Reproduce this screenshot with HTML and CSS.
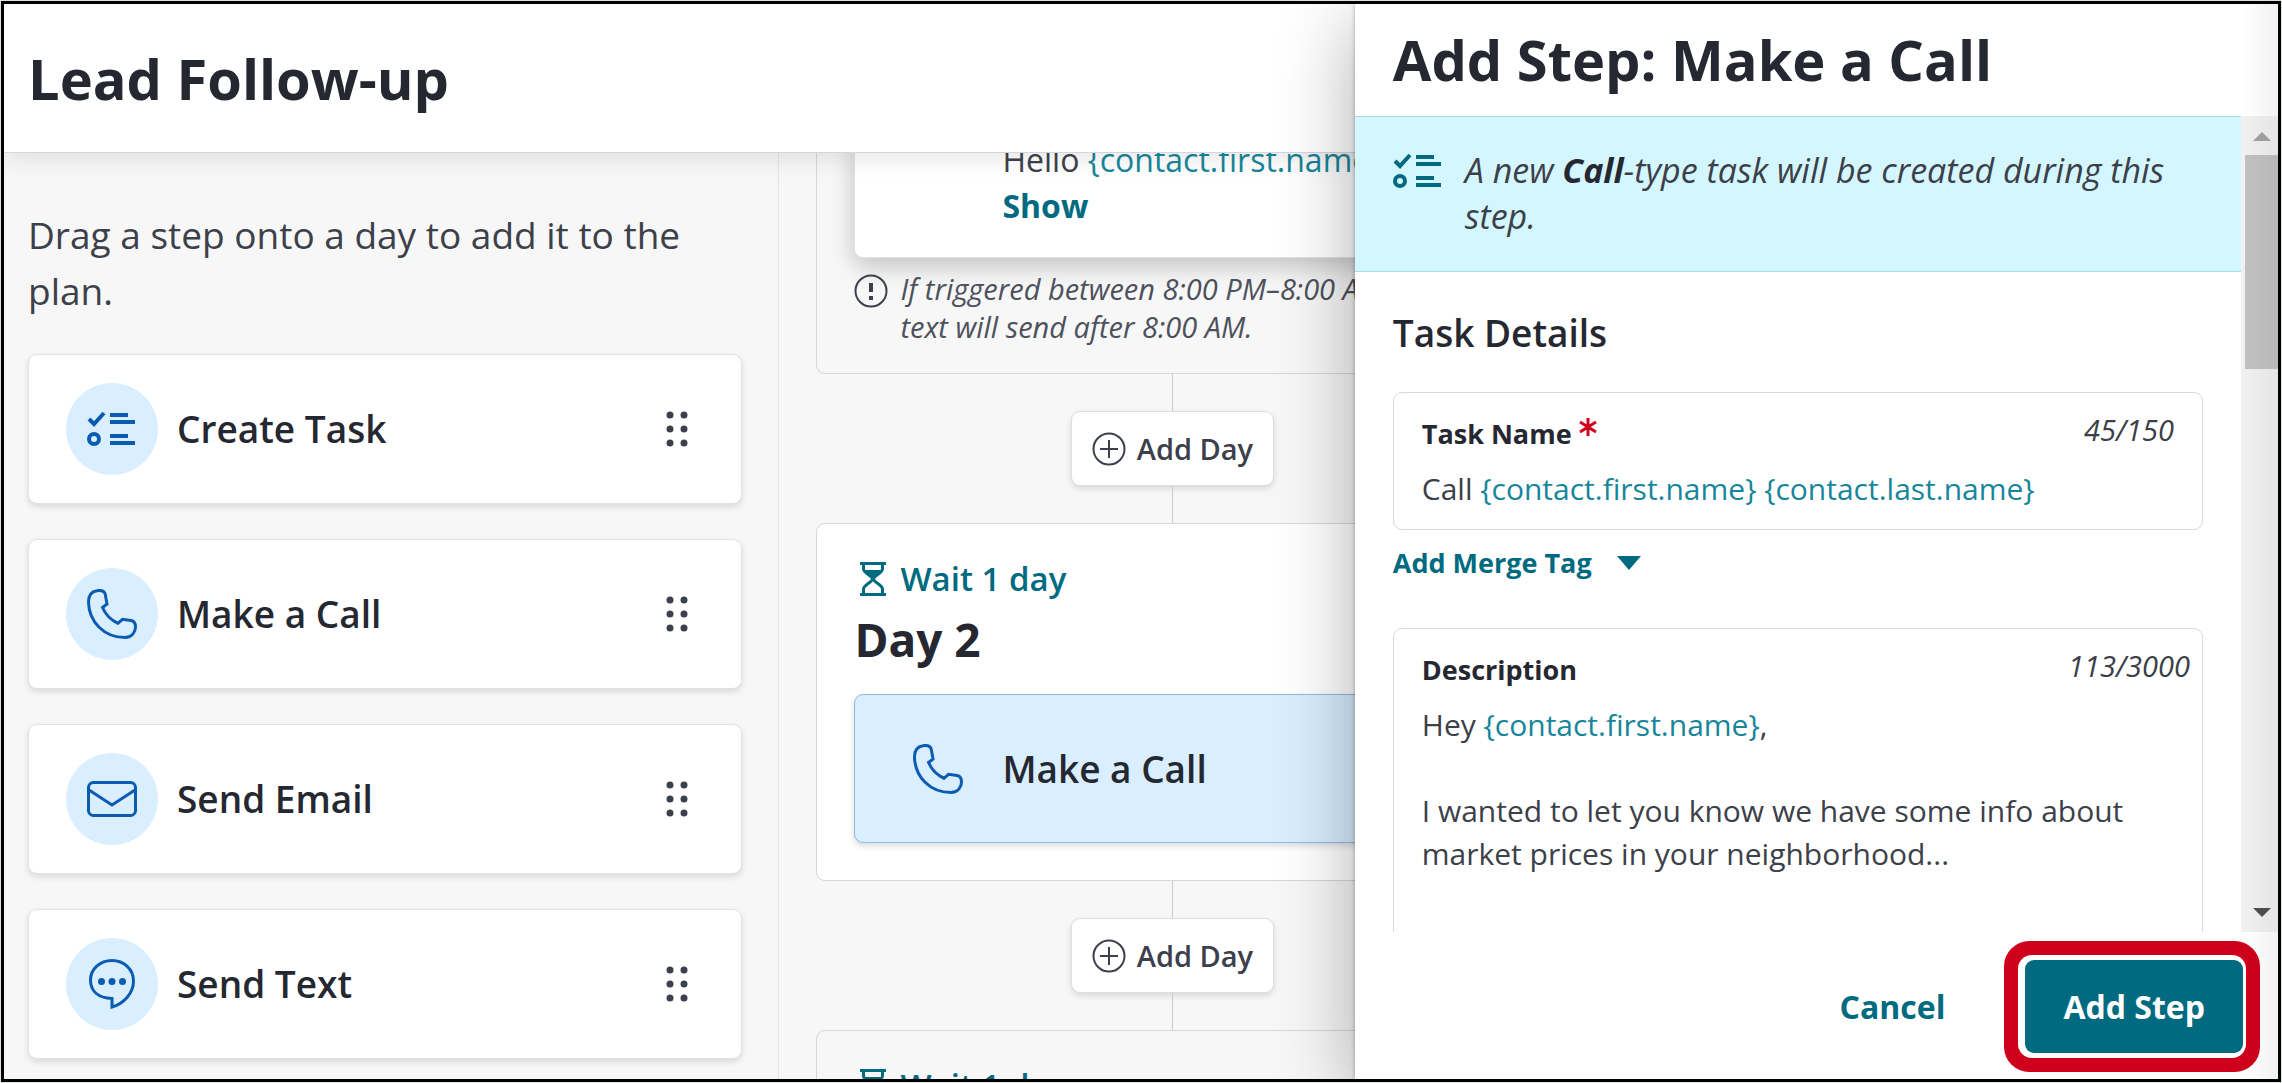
FILE: index.html
```html
<!DOCTYPE html>
<html lang="en">
<head>
    <meta charset="UTF-8">
    <meta name="viewport" content="width=device-width, initial-scale=1.0">
    <title>Lead Follow-up</title>
    <link rel="stylesheet" href="styles.css">
</head>
<body>

    <!-- Shared icons -->
    <svg class="sprite" aria-hidden="true">
        <symbol id="icon-task" viewBox="0 0 50 36">
            <path d="M2 8l5 5L17 2M23 4h18M23 11h25M23 25h18M23 32h25"/>
            <ellipse cx="7" cy="28" rx="5" ry="5"/>
        </symbol>
        <symbol id="icon-call" viewBox="0 0 50 50">
            <path d="M10 1.7C4 2.5 1.5 7 1.5 13C2 33 17 48.5 38 48.5C45 48.5 48.5 43 48.5 38C48.5 34 47 32 44 31.5L35.5 30.3L31 34.3C24 31 18.5 25.5 15.5 18.5L20 15L18.3 5.5C17.5 2 14 1 10 1.7Z"/>
        </symbol>
        <symbol id="icon-mail" viewBox="0 0 50 36">
            <rect x="1.5" y="1.5" width="47" height="33" rx="5"/>
            <path d="M2 9l23 15L48 9"/>
        </symbol>
        <symbol id="icon-text" viewBox="0 0 50 50">
            <path d="M25 39.5V48C37 44.5 46.5 34 46.5 22C46.5 10.5 37 1.5 25 1.5C13 1.5 3.5 10 3.5 21C3.5 32 11 39 25 39.5Z"/>
            <g class="dots"><circle cx="14.5" cy="22.5" r="3.5"/><circle cx="25" cy="22.5" r="3.5"/><circle cx="35.5" cy="22.5" r="3.5"/></g>
        </symbol>
        <symbol id="icon-grip" viewBox="0 0 24 36">
            <circle cx="4" cy="4" r="3.5"/><circle cx="18" cy="4" r="3.5"/>
            <circle cx="4" cy="18" r="3.5"/><circle cx="18" cy="18" r="3.5"/>
            <circle cx="4" cy="32" r="3.5"/><circle cx="18" cy="32" r="3.5"/>
        </symbol>
        <symbol id="icon-hourglass" viewBox="0 0 26 34">
            <path d="M0 1.5h26M0 32.5h26M3.5 2v5c0 4 9 7 9 10s-9 6-9 10v5M22.5 2v5c0 4-9 7-9 10s9 6 9 10v5"/>
            <path class="sand" d="M4 8h18c-1 3-8 6-9 10c-1-4-8-7-9-10z"/>
        </symbol>
        <symbol id="icon-plus" viewBox="0 0 34 34">
            <circle cx="17" cy="17" r="15.5"/>
            <path d="M17 8v18M8 17h18"/>
        </symbol>
        <symbol id="icon-alert" viewBox="0 0 34 34">
            <circle cx="17" cy="17" r="15.5"/>
            <path class="mark" d="M17 9v9M17 22v4"/>
        </symbol>
    </svg>

    <div class="app">
        <header class="page-header">
            <h1 class="title">Lead Follow-up</h1>
        </header>

        <div class="workspace">
            <aside class="sidebar">
                <p class="hint">Drag a step onto a day to add it to the plan.</p>
                <ul class="step-list">
                    <li class="step-item" draggable="true">
                        <span class="badge"><svg class="icon icon-wide icon-bold"><use href="#icon-task"/></svg></span>
                        <span class="step-name">Create Task</span>
                        <svg class="grip"><use href="#icon-grip"/></svg>
                    </li>
                    <li class="step-item" draggable="true">
                        <span class="badge"><svg class="icon"><use href="#icon-call"/></svg></span>
                        <span class="step-name">Make a Call</span>
                        <svg class="grip"><use href="#icon-grip"/></svg>
                    </li>
                    <li class="step-item" draggable="true">
                        <span class="badge"><svg class="icon icon-wide"><use href="#icon-mail"/></svg></span>
                        <span class="step-name">Send Email</span>
                        <svg class="grip"><use href="#icon-grip"/></svg>
                    </li>
                    <li class="step-item" draggable="true">
                        <span class="badge"><svg class="icon"><use href="#icon-text"/></svg></span>
                        <span class="step-name">Send Text</span>
                        <svg class="grip"><use href="#icon-grip"/></svg>
                    </li>
                </ul>
            </aside>

            <main class="plan">
                <section class="day day-first">
                    <div class="message">
                        <p>Hello <span class="tag">{contact.first.name}</span></p>
                        <button type="button" class="show">Show</button>
                    </div>
                    <p class="note">
                        <svg class="icon-small"><use href="#icon-alert"/></svg>
                        <span>If triggered between 8:00 PM–8:00 AM, this text will send after 8:00 AM.</span>
                    </p>
                </section>

                <div class="connector">
                    <button type="button" class="add-day"><svg class="icon-small"><use href="#icon-plus"/></svg>Add Day</button>
                </div>

                <section class="day day-active">
                    <button type="button" class="wait"><svg class="hourglass"><use href="#icon-hourglass"/></svg>Wait 1 day</button>
                    <h2 class="day-title">Day 2</h2>
                    <div class="selected-step">
                        <svg class="icon"><use href="#icon-call"/></svg>
                        <span class="step-name">Make a Call</span>
                    </div>
                </section>

                <div class="connector">
                    <button type="button" class="add-day"><svg class="icon-small"><use href="#icon-plus"/></svg>Add Day</button>
                </div>

                <section class="day">
                    <button type="button" class="wait"><svg class="hourglass"><use href="#icon-hourglass"/></svg>Wait 1 day</button>
                </section>
            </main>
        </div>

        <!-- Add step drawer -->
        <form class="drawer">
            <h2 class="title drawer-title">Add Step: Make a Call</h2>

            <div class="drawer-body">
                <div class="drawer-content">
                    <div class="banner">
                        <svg class="icon icon-wide icon-bold"><use href="#icon-task"/></svg>
                        <p>A new <strong>Call</strong>-type task will be created during this step.</p>
                    </div>

                    <div class="details">
                        <h3 class="details-title">Task Details</h3>

                        <div class="field">
                            <div class="field-head">
                                <label for="task-name">Task Name <svg class="required" viewBox="0 0 18 18"><path d="M9 0v18M1 4l16 10M17 4L1 14"/></svg></label>
                                <span class="count">45/150</span>
                            </div>
                            <div class="tag-input">
                                <div class="tag-text" aria-hidden="true">Call <span class="tag">{contact.first.name}</span> <span class="tag">{contact.last.name}</span></div>
                                <input type="text" id="task-name" value="Call {contact.first.name} {contact.last.name}" required>
                            </div>
                        </div>

                        <button type="button" class="merge-tag">Add Merge Tag <span class="caret"></span></button>

                        <div class="field field-large">
                            <div class="field-head">
                                <label for="description">Description</label>
                                <span class="count">113/3000</span>
                            </div>
                            <div class="tag-input">
                                <div class="tag-text" aria-hidden="true">Hey <span class="tag">{contact.first.name}</span>,

I wanted to let you know we have some info about market prices in your neighborhood...</div>
                                <textarea id="description" rows="7">Hey {contact.first.name},

I wanted to let you know we have some info about market prices in your neighborhood...</textarea>
                            </div>
                        </div>
                    </div>
                </div>

                <div class="scrollbar" aria-hidden="true">
                    <span class="arrow arrow-up"></span>
                    <span class="thumb"></span>
                    <span class="arrow arrow-down"></span>
                </div>
            </div>

            <div class="drawer-footer">
                <button type="button" class="cancel">Cancel</button>
                <button type="submit" class="submit">Add Step</button>
            </div>
        </form>
    </div>

</body>
</html>
```
FILE: styles.css
```css
* {
    box-sizing: border-box;
}

body {
    margin: 0;
    padding: 1px;
    height: 100vh;
    overflow: hidden;
    font-family: "Open Sans", "Noto Sans", sans-serif;
    color: #3c4049;
    background-color: #dfe3e0;
}

h1, h2, h3, p, ul {
    margin: 0;
    padding: 0;
}

button, input, textarea {
    font: inherit;
    border: none;
    background: none;
    padding: 0;
    margin: 0;
}

button {
    cursor: pointer;
}

.sprite {
    position: absolute;
    width: 0;
    height: 0;
}

.app {
    position: relative;
    height: 100%;
    display: flex;
    flex-direction: column;
    overflow: hidden;
    border: 3px solid #000;
    background-color: #f7f7f7;
}

.title {
    font-size: 56px;
    line-height: 72px;
    font-weight: 700;
    color: #252831;
}

.page-header {
    position: relative;
    z-index: 1;
    padding: 38px 24px;
    background-color: white;
    border-bottom: 1px solid #d5d6db;
    box-shadow: 0 4px 24px rgba(40, 44, 60, 0.12);
}

.workspace {
    flex: 1;
    min-height: 0;
    display: flex;
}

/* Icons */
.icon {
    flex: none;
    width: 50px;
    height: 50px;
    fill: none;
    stroke: #0b5cb0;
    stroke-width: 3;
}

.icon-wide {
    height: 36px;
}

.icon-bold {
    stroke-width: 4;
}

.icon-small {
    flex: none;
    width: 34px;
    height: 34px;
    fill: none;
    stroke: #3c404c;
    stroke-width: 2;
}

.dots {
    fill: #0b5cb0;
    stroke: none;
}

.mark {
    stroke-width: 4;
}

.sand {
    fill: #006b80;
    stroke: none;
}

/* Sidebar */
.sidebar {
    flex: 0 0 34.1%;
    padding: 54px 36px 0 24px;
    border-right: 1px solid #e2e3e5;
    overflow: hidden;
}

.hint {
    margin-bottom: 35px;
    font-size: 37px;
    line-height: 56px;
}

.step-list {
    display: flex;
    flex-direction: column;
    gap: 35px;
    list-style: none;
}

.step-item {
    display: flex;
    align-items: center;
    gap: 19px;
    padding: 28px 51px 28px 37px;
    background-color: white;
    border: 1px solid #e2e2e4;
    border-radius: 9px;
    box-shadow: 0 3px 6px rgba(0, 0, 0, 0.12);
    cursor: grab;
}

.badge {
    display: flex;
    align-items: center;
    justify-content: center;
    width: 92px;
    height: 92px;
    border-radius: 50%;
    background-color: #d9eeff;
}

.step-name {
    flex: 1;
    font-size: 37px;
    line-height: 50px;
    font-weight: 600;
    color: #252831;
}

.grip {
    width: 24px;
    height: 36px;
    fill: #3c404c;
}

/* Plan column, scrolled a little way down */
.plan {
    flex: 1;
    min-width: 0;
    margin-top: -16px;
    padding-left: 37px;
}

.day {
    max-width: 712px;
    padding: 33px 37px 37px;
    border: 1px solid #d5d6d9;
    border-radius: 9px;
}

.day-active {
    background-color: white;
}

.day-first {
    padding-top: 0;
    padding-bottom: 27px;
    border-top: none;
}

.message {
    padding: 0 37px 28px 147px;
    font-size: 32px;
    line-height: 46px;
    background-color: white;
    border: 1px solid #e2e2e4;
    border-top: none;
    border-radius: 0 0 9px 9px;
    box-shadow: 0 8px 24px rgba(0, 0, 0, 0.22);
}

.tag {
    color: #17869a;
}

.show {
    display: block;
    font-weight: 700;
    color: #006b80;
}

.note {
    display: flex;
    gap: 12px;
    margin-top: 12px;
    font-size: 29px;
    line-height: 38px;
    font-style: italic;
    color: #4d515c;
}

.note .icon-small {
    margin-top: 4px;
}

.connector {
    display: flex;
    flex-direction: column;
    align-items: center;
    max-width: 712px;
}

.connector::before,
.connector::after {
    content: "";
    width: 1px;
    height: 37px;
    background-color: #c9cacd;
}

.add-day {
    display: flex;
    align-items: center;
    gap: 11px;
    height: 75px;
    padding: 0 20px;
    font-size: 29px;
    font-weight: 600;
    color: #3c404c;
    background-color: white;
    border: 1px solid #dedfe1;
    border-radius: 9px;
    box-shadow: 0 3px 6px rgba(0, 0, 0, 0.12);
}

.wait {
    display: flex;
    align-items: center;
    gap: 14px;
    padding-left: 6px;
    font-size: 33px;
    line-height: 44px;
    font-weight: 600;
    color: #006b80;
}

.hourglass {
    width: 26px;
    height: 34px;
    fill: none;
    stroke: #006b80;
    stroke-width: 3;
}

.day-title {
    margin: 10px 0 27px;
    font-size: 46px;
    line-height: 56px;
    font-weight: 700;
    color: #252831;
}

.selected-step {
    display: flex;
    align-items: center;
    gap: 39px;
    height: 149px;
    padding: 0 58px;
    background-color: #d9eeff;
    border: 1px solid #8fbbe4;
    border-radius: 9px;
    box-shadow: 0 3px 6px rgba(0, 0, 0, 0.14);
}

/* Drawer */
.drawer {
    position: absolute;
    z-index: 2;
    top: 0;
    right: 0;
    bottom: 0;
    width: 40.6%;
    display: flex;
    flex-direction: column;
    background-color: white;
    box-shadow: 0 18px 72px rgba(0, 0, 0, 0.32), 0 0 4px rgba(0, 0, 0, 0.3);
}

.drawer::after {
    content: "";
    position: absolute;
    top: 0;
    right: 0;
    bottom: 0;
    width: 36px;
    background: linear-gradient(to right, transparent, rgba(0, 0, 0, 0.05));
    pointer-events: none;
}

.drawer-title {
    padding: 19px 38px 21px;
}

.drawer-body {
    flex: 1;
    min-height: 0;
    display: flex;
}

.drawer-content {
    flex: 1;
    min-width: 0;
    overflow: hidden;
}

.banner {
    display: flex;
    gap: 22px;
    padding: 30px 38px 32px;
    font-size: 34px;
    line-height: 46px;
    font-style: italic;
    background-color: #d4f7ff;
    border-top: 1px solid #a9dde7;
    border-bottom: 1px solid #a9dde7;
}

.banner strong {
    color: #252831;
}

.banner .icon {
    margin-top: 6px;
    stroke: #006b80;
}

.details {
    padding: 36px 38px 0;
}

.details-title {
    margin-bottom: 34px;
    font-size: 37px;
    line-height: 50px;
    font-weight: 600;
    color: #252831;
}

.field {
    padding: 23px 28px 19px;
    border: 1px solid #d9dadd;
    border-radius: 9px;
}

.field-large {
    padding-right: 12px;
}

.field-head {
    display: flex;
    align-items: flex-start;
    justify-content: space-between;
    margin-bottom: 15px;
}

.field-head label {
    font-size: 27px;
    line-height: 36px;
    font-weight: 700;
    color: #252831;
}

.required {
    width: 18px;
    height: 18px;
    vertical-align: 8px;
    stroke: #d0021b;
    stroke-width: 3;
}

.count {
    font-size: 29px;
    line-height: 28px;
    font-style: italic;
}

/* Coloured tags are painted under the editable text */
.tag-input {
    display: grid;
    font-size: 30px;
    line-height: 43px;
}

.tag-text,
.tag-input input,
.tag-input textarea {
    grid-area: 1 / 1;
    width: 100%;
    white-space: pre-wrap;
}

.tag-input input,
.tag-input textarea {
    height: auto;
    display: block;
    color: transparent;
    caret-color: #252831;
    resize: none;
    outline: none;
    overflow: hidden;
}

.merge-tag {
    display: flex;
    align-items: center;
    gap: 25px;
    margin: 15px 0 47px;
    font-size: 27px;
    line-height: 36px;
    font-weight: 700;
    color: #006b80;
}

.caret {
    border: 12px solid transparent;
    border-top: 14px solid #006b80;
    border-bottom: none;
}

.scrollbar {
    display: flex;
    flex-direction: column;
    align-items: center;
    width: 37px;
    padding: 0 0 0 4px;
    background-color: #f1f1f1;
}

.arrow {
    border: 9px solid transparent;
}

.arrow-up {
    margin: 16px 0 14px;
    border-top: none;
    border-bottom-color: #a3a3a3;
}

.arrow-down {
    margin: auto 0 15px;
    border-bottom: none;
    border-top-color: #505050;
}

.thumb {
    align-self: stretch;
    height: 214px;
    background-color: #c1c1c1;
}

.drawer-footer {
    display: flex;
    align-items: center;
    justify-content: flex-end;
    gap: 80px;
    padding: 28px 35px 26px;
    font-size: 32px;
    font-weight: 700;
}

.cancel {
    color: #006b80;
}

/* Primary button with its red highlight ring */
.submit {
    height: 93px;
    padding: 0 38px;
    color: white;
    background-color: #006b80;
    border-radius: 9px;
    box-shadow: -2px 0 0 5px white, -2px 0 0 19px #cf001c;
}
```
